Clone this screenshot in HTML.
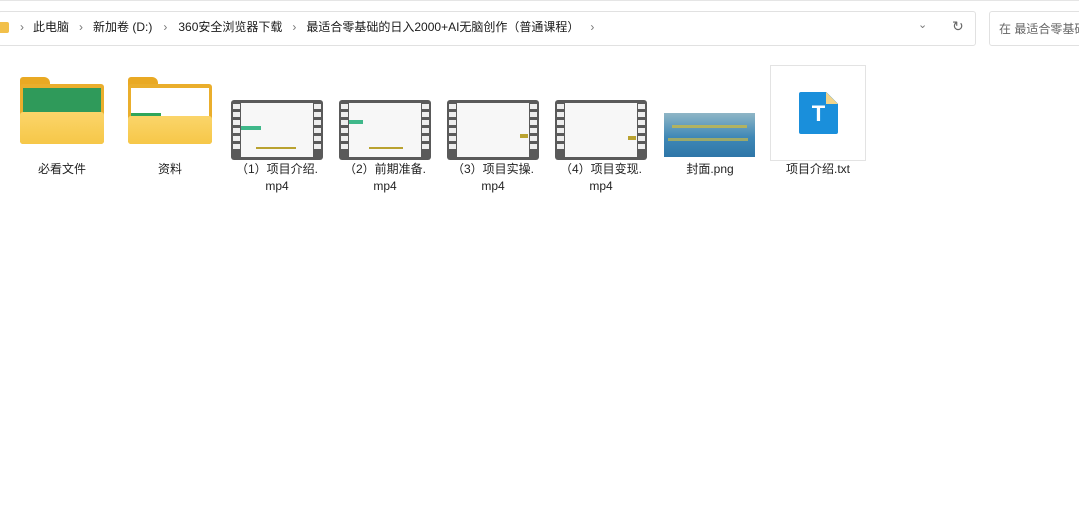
<!DOCTYPE html>
<html><head><meta charset="utf-8"><style>
*{margin:0;padding:0;box-sizing:border-box}
body{width:1079px;height:528px;background:#fff;position:relative;overflow:hidden;font-family:"Liberation Sans","Noto Sans CJK SC",sans-serif;color:#1a1a1a}
.a{position:absolute}
.lbl{position:absolute;font-size:12px;text-align:center;line-height:17px;color:#222}
.vid{position:absolute;width:92px;height:60px;background:#5a5a5a;border-radius:3px}
.vid .scr{position:absolute;left:10px;top:3px;width:72px;height:54px;background:#f7f7f7}
.holes{position:absolute;top:4px;width:7px}
.holes i{display:block;width:7px;height:5px;background:#eee;margin-bottom:3px}
</style></head><body>
<div class="a" style="left:0;top:0;width:1079px;height:1px;background:#e5e5e5"></div>
<div class="a" style="left:-2px;top:11px;width:978px;height:35px;border:1px solid #e1e1e1;border-radius:3px"></div>
<div class="a" style="left:-3px;top:22px;width:12px;height:11px;background:#f2c04a;border-radius:2px"></div>
<div class="a" style="left:0;top:19px;font-size:12px;line-height:17px;white-space:nowrap;color:#1a1a1a">
<span style="color:#777;margin:0 9px 0 20px">›</span>此电脑<span style="color:#777;margin:0 10px">›</span>新加卷 (D:)<span style="color:#777;margin:0 11px">›</span>360安全浏览器下载<span style="color:#777;margin:0 10px">›</span>最适合零基础的日入2000+AI无脑创作（普通课程）<span style="color:#777;margin:0 11px">›</span></div>
<div class="a" style="left:918px;top:18px;font-size:11px;color:#777">⌄</div>
<div class="a" style="left:952px;top:18px;font-size:14px;color:#666">↻</div>
<div class="a" style="left:989px;top:11px;width:100px;height:35px;border:1px solid #e1e1e1;border-radius:3px"></div>
<div class="a" style="left:999px;top:20px;font-size:12px;color:#666;white-space:nowrap">在 最适合零基础</div>

<div class="a" style="left:20px;top:77px;width:30px;height:10px;background:#e9a923;border-radius:3px 6px 0 0"></div>
<div class="a" style="left:20px;top:84px;width:84px;height:60px;background:#eaae2c;border-radius:3px"></div>
<div class="a" style="left:23px;top:88px;width:78px;height:30px;background:#2f9a5a"></div>
<div class="a" style="left:20px;top:112px;width:84px;height:32px;background:linear-gradient(#fbd56a,#f6c748);border-radius:3px"></div>
<div class="a" style="left:128px;top:77px;width:30px;height:10px;background:#e9a923;border-radius:3px 6px 0 0"></div>
<div class="a" style="left:128px;top:84px;width:84px;height:60px;background:#eaae2c;border-radius:3px"></div>
<div class="a" style="left:131px;top:88px;width:78px;height:30px;background:#fff"></div>
<div class="a" style="left:131px;top:113px;width:30px;height:4px;background:#2fa55a"></div>
<div class="a" style="left:128px;top:116px;width:84px;height:28px;background:linear-gradient(#fbd56a,#f6c748);border-radius:3px"></div>

<div class="vid" style="left:231px;top:100px"><div class="holes" style="left:2px"><i></i><i></i><i></i><i></i><i></i><i></i></div><div class="scr"><div class="a" style="left:0;top:23px;width:20px;height:4px;background:#3fb88a"></div><div class="a" style="left:15px;top:44px;width:40px;height:2px;background:#b9a230"></div></div><div class="holes" style="left:83px"><i></i><i></i><i></i><i></i><i></i><i></i></div></div>
<div class="vid" style="left:339px;top:100px"><div class="holes" style="left:2px"><i></i><i></i><i></i><i></i><i></i><i></i></div><div class="scr"><div class="a" style="left:0;top:17px;width:14px;height:4px;background:#3fb88a"></div><div class="a" style="left:20px;top:44px;width:34px;height:2px;background:#b9a230"></div></div><div class="holes" style="left:83px"><i></i><i></i><i></i><i></i><i></i><i></i></div></div>
<div class="vid" style="left:447px;top:100px"><div class="holes" style="left:2px"><i></i><i></i><i></i><i></i><i></i><i></i></div><div class="scr"><div class="a" style="left:63px;top:31px;width:8px;height:4px;background:#b9a230"></div></div><div class="holes" style="left:83px"><i></i><i></i><i></i><i></i><i></i><i></i></div></div>
<div class="vid" style="left:555px;top:100px"><div class="holes" style="left:2px"><i></i><i></i><i></i><i></i><i></i><i></i></div><div class="scr"><div class="a" style="left:63px;top:33px;width:8px;height:4px;background:#b9a230"></div></div><div class="holes" style="left:83px"><i></i><i></i><i></i><i></i><i></i><i></i></div></div>

<div class="a" style="left:664px;top:113px;width:91px;height:44px;background:linear-gradient(#8fb6c6,#3f88b6 55%,#2e76a8)"></div>
<div class="a" style="left:672px;top:125px;width:75px;height:3px;background:#c5b84a;opacity:.8"></div>
<div class="a" style="left:668px;top:138px;width:80px;height:3px;background:#c5b84a;opacity:.7"></div>

<div class="a" style="left:770px;top:65px;width:96px;height:96px;border:1px solid #e3e3e3"></div>
<div class="a" style="left:799px;top:92px;width:39px;height:42px;background:#1a8fdb;border-radius:2px;clip-path:polygon(0 0,70% 0,100% 28%,100% 100%,0 100%)"></div>
<div class="a" style="left:826px;top:92px;width:12px;height:12px;background:#f2d48a;clip-path:polygon(0 0,100% 100%,0 100%)"></div>
<div class="a" style="left:799px;top:99px;width:39px;text-align:center;color:#fff;font-weight:bold;font-size:22px;line-height:30px">T</div>

<div class="lbl" style="left:12px;top:161px;width:100px">必看文件</div>
<div class="lbl" style="left:120px;top:161px;width:100px">资料</div>
<div class="lbl" style="left:227px;top:161px;width:100px">（1）项目介绍.<br>mp4</div>
<div class="lbl" style="left:335px;top:161px;width:100px">（2）前期准备.<br>mp4</div>
<div class="lbl" style="left:443px;top:161px;width:100px">（3）项目实操.<br>mp4</div>
<div class="lbl" style="left:551px;top:161px;width:100px">（4）项目变现.<br>mp4</div>
<div class="lbl" style="left:660px;top:161px;width:100px">封面.png</div>
<div class="lbl" style="left:768px;top:161px;width:100px">项目介绍.txt</div>
</body></html>
